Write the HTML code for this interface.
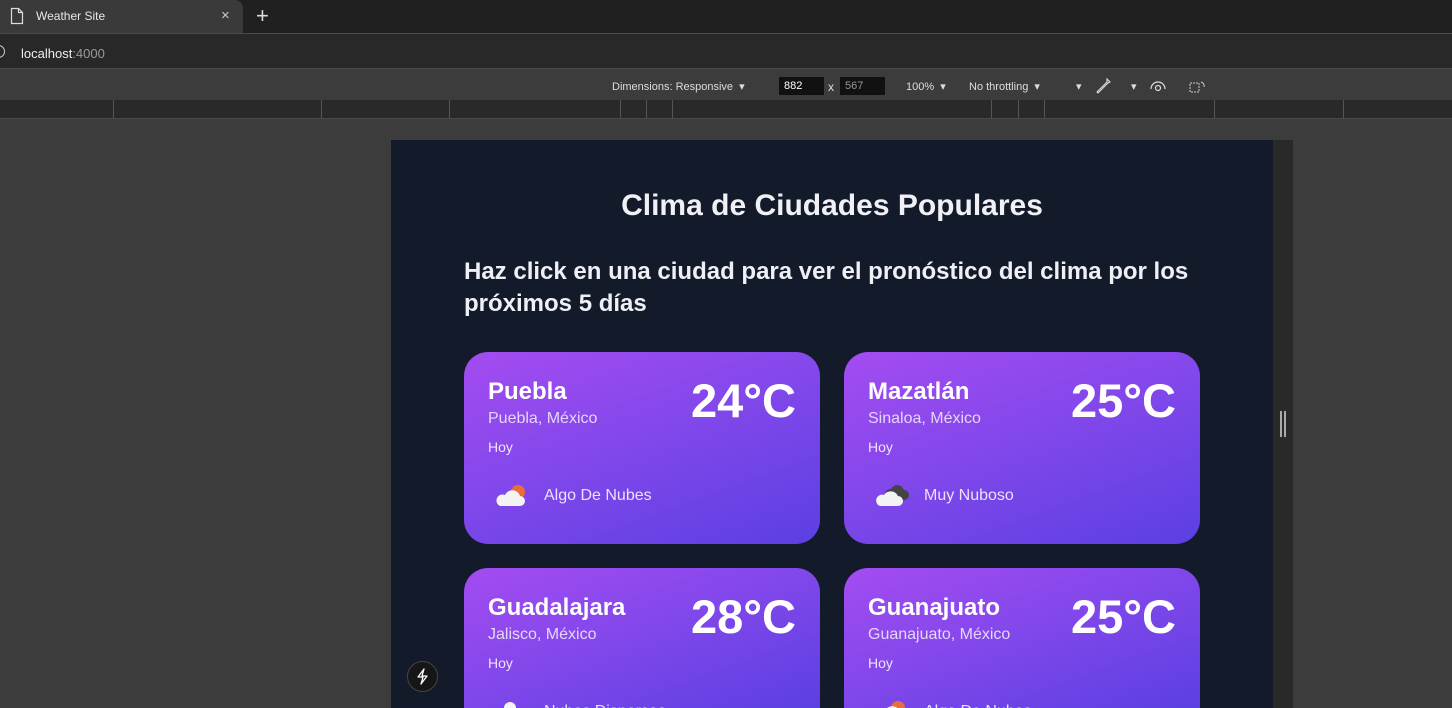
<!DOCTYPE html>
<html><head><meta charset="utf-8"><style>
*{box-sizing:border-box;margin:0;padding:0}
html,body{width:1452px;height:708px;overflow:hidden}
body{background:#3c3c3c;font-family:"Liberation Sans",sans-serif;position:relative}
.abs{position:absolute}
.card{position:absolute;width:356px;height:192px;border-radius:24px;background:linear-gradient(160deg,#a44cf1 0%,#7f47ea 50%,#5b3fe2 100%);color:#fff;overflow:hidden}
.card .n{position:absolute;left:24px;top:26px;font-size:24px;font-weight:bold}
.card .r{position:absolute;left:24px;top:58px;font-size:16px;color:#e6d6fb}
.card .h{position:absolute;left:24px;top:87px;font-size:14px;color:#efe4fd}
.card .t{position:absolute;right:24px;top:21px;font-size:47px;font-weight:bold}
.card .ic{position:absolute;left:30px;top:128px}
.card .d{position:absolute;left:80px;top:135px;font-size:16px;color:#ece1fd}
</style></head><body>
<div class="abs" style="left:0;top:0;width:1452px;height:33px;background:#202020"></div>
<div class="abs" style="left:0;top:0;width:243px;height:33px;background:#3a3a3a;border-radius:0 8px 0 0"></div>
<svg class="abs" style="left:10px;top:7px" width="14" height="18" viewBox="0 0 14 18"><path d="M1.5 1.5h7l4 4v11h-11z M8.5 1.5v4h4" fill="none" stroke="#ddd" stroke-width="1.2"/></svg>
<div class="abs" style="left:36px;top:9px;font-size:12px;color:#e8e8e8">Weather Site</div>
<div class="abs" style="left:221px;top:7px;font-size:15px;color:#ccc">×</div>
<div class="abs" style="left:256px;top:3px;font-size:22px;color:#ddd;font-weight:300">+</div>
<div class="abs" style="left:0;top:33px;width:1452px;height:36px;background:#282828;border-top:1px solid #4a4a4a;border-bottom:1px solid #4a4a4a"></div>
<div class="abs" style="left:-8px;top:45px;width:13px;height:13px;border:1.5px solid #ccc;border-radius:50%"></div>
<div class="abs" style="left:21px;top:46px;font-size:13px;color:#eee">localhost<span style="color:#999">:4000</span></div>
<div class="abs" style="left:0;top:69px;width:1452px;height:31px;background:#3c3c3c"></div>
<div class="abs" style="left:612px;top:80px;font-size:11px;color:#ddd">Dimensions: Responsive&nbsp;&nbsp;▾</div>
<div class="abs" style="left:779px;top:77px;width:45px;height:18px;background:#111;color:#fff;font-size:11px;padding:3px 5px">882</div>
<div class="abs" style="left:828px;top:80px;font-size:12px;color:#ddd">x</div>
<div class="abs" style="left:840px;top:77px;width:45px;height:18px;background:#111;color:#999;font-size:11px;padding:3px 5px">567</div>
<div class="abs" style="left:906px;top:80px;font-size:11px;color:#ddd">100%&nbsp;&nbsp;▾</div>
<div class="abs" style="left:969px;top:80px;font-size:11px;color:#ddd">No throttling&nbsp;&nbsp;▾</div>
<div class="abs" style="left:1076px;top:80px;font-size:11px;color:#ddd">▾</div>
<svg class="abs" style="left:1096px;top:77px" width="16" height="18" viewBox="0 0 16 18"><path d="M11 2l3 3l-2 1l-7 7l-3 3l-1-1l3-3l7-7z" fill="none" stroke="#ddd" stroke-width="1.1"/></svg>
<div class="abs" style="left:1131px;top:80px;font-size:11px;color:#ddd">▾</div>
<svg class="abs" style="left:1149px;top:79px" width="18" height="14" viewBox="0 0 18 14"><path d="M2 10a7 7 0 0 1 14 0" fill="none" stroke="#ddd" stroke-width="1.2"/><circle cx="9" cy="9" r="2.5" fill="none" stroke="#ddd" stroke-width="1.2"/></svg>
<svg class="abs" style="left:1188px;top:78px" width="20" height="16" viewBox="0 0 20 16"><rect x="2" y="5" width="9" height="9" fill="none" stroke="#ccc" stroke-dasharray="2 1"/><path d="M13 4a4 4 0 0 1 3 5" fill="none" stroke="#ccc"/></svg>
<div class="abs" style="left:0;top:100px;width:1452px;height:19px;background:#292929;border-bottom:1px solid #4a4a4a"></div>
<div class="abs" style="left:113px;top:100px;width:1px;height:18px;background:#555"></div>
<div class="abs" style="left:321px;top:100px;width:1px;height:18px;background:#555"></div>
<div class="abs" style="left:449px;top:100px;width:1px;height:18px;background:#555"></div>
<div class="abs" style="left:620px;top:100px;width:1px;height:18px;background:#555"></div>
<div class="abs" style="left:646px;top:100px;width:1px;height:18px;background:#555"></div>
<div class="abs" style="left:672px;top:100px;width:1px;height:18px;background:#555"></div>
<div class="abs" style="left:991px;top:100px;width:1px;height:18px;background:#555"></div>
<div class="abs" style="left:1018px;top:100px;width:1px;height:18px;background:#555"></div>
<div class="abs" style="left:1044px;top:100px;width:1px;height:18px;background:#555"></div>
<div class="abs" style="left:1214px;top:100px;width:1px;height:18px;background:#555"></div>
<div class="abs" style="left:1343px;top:100px;width:1px;height:18px;background:#555"></div>
<div class="abs" style="left:1273px;top:140px;width:20px;height:568px;background:#292929"></div>
<div class="abs" style="left:1280px;top:411px;width:2px;height:26px;background:#aaa"></div>
<div class="abs" style="left:1284px;top:411px;width:2px;height:26px;background:#aaa"></div>
<div class="abs" style="left:391px;top:140px;width:882px;height:568px;background:#131a2a;overflow:hidden">
<div class="abs" style="left:0;top:49px;width:882px;text-align:center;font-size:30px;font-weight:bold;color:#f0f0f5">Clima de Ciudades Populares</div>
<div class="abs" style="left:73px;top:116px;width:760px;font-size:24px;font-weight:bold;color:#eef0f5;line-height:32px">Haz click en una ciudad para ver el pronóstico del clima por los próximos 5 días</div>
<div class="card" style="left:73px;top:212px"><div class="n">Puebla</div><div class="r">Puebla, México</div><div class="h">Hoy</div><div class="t">24°C</div>
<svg class="ic" width="36" height="28" viewBox="0 0 36 28"><circle cx="24" cy="12" r="7" fill="#e86f3c"/><path d="M6 26h20a5 5 0 0 0 0-10a8 8 0 0 0-15-1a5.5 5.5 0 0 0-5 11z" fill="#f3f3f3"/></svg><div class="d">Algo De Nubes</div></div>
<div class="card" style="left:453px;top:212px"><div class="n">Mazatlán</div><div class="r">Sinaloa, México</div><div class="h">Hoy</div><div class="t">25°C</div>
<svg class="ic" width="38" height="28" viewBox="0 0 38 28"><path d="M16 20h14a5 5 0 0 0 0-10a7 7 0 0 0-13-1a5 5 0 0 0-1 11z" fill="#444"/><path d="M6 26h18a5 5 0 0 0 0-10a8 8 0 0 0-14-1a5.5 5.5 0 0 0-4 11z" fill="#f3f3f3"/></svg><div class="d">Muy Nuboso</div></div>
<div class="card" style="left:73px;top:428px;height:140px;border-radius:24px 24px 0 0"><div class="n">Guadalajara</div><div class="r">Jalisco, México</div><div class="h">Hoy</div><div class="t">28°C</div>
<svg class="ic" width="36" height="28" viewBox="0 0 36 28"><circle cx="16" cy="12" r="6" fill="#f3f3f3"/></svg><div class="d">Nubes Dispersas</div></div>
<div class="card" style="left:453px;top:428px;height:140px;border-radius:24px 24px 0 0"><div class="n">Guanajuato</div><div class="r">Guanajuato, México</div><div class="h">Hoy</div><div class="t">25°C</div>
<svg class="ic" width="36" height="28" viewBox="0 0 36 28"><circle cx="24" cy="12" r="7" fill="#e86f3c"/><path d="M6 26h20a5 5 0 0 0 0-10a8 8 0 0 0-15-1a5.5 5.5 0 0 0-5 11z" fill="#f3f3f3"/></svg><div class="d">Algo De Nubes</div></div>
<div class="abs" style="left:16px;top:521px;width:31px;height:31px;border-radius:50%;background:#161616;border:1px solid #444"></div>
<svg class="abs" style="left:24px;top:528px" width="15" height="17" viewBox="0 0 15 17"><path d="M9 1L3 9h5l-2 7l6-8H7z" fill="none" stroke="#fff" stroke-width="1.3" stroke-linejoin="round"/></svg>
</div>
</body></html>
